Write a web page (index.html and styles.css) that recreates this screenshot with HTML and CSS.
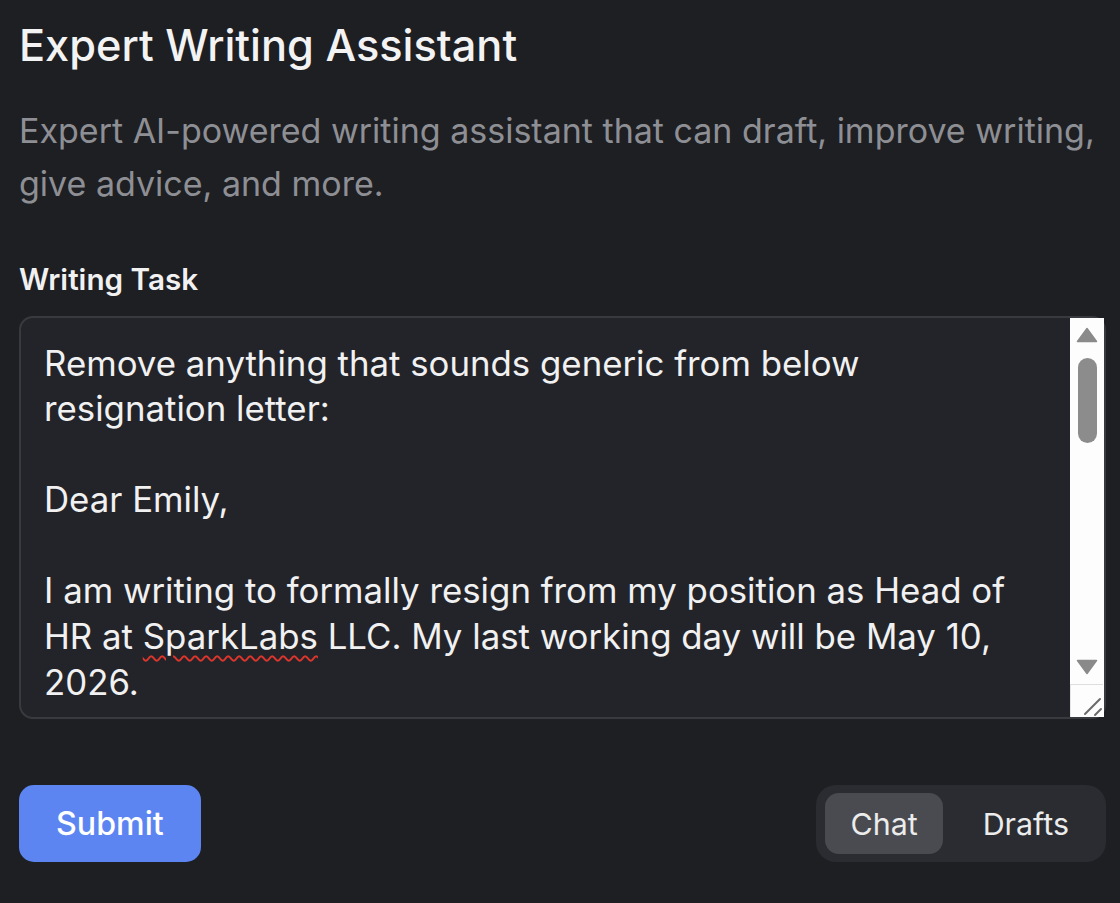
FILE: index.html
```html
<!DOCTYPE html>
<html lang="en">
<head>
<meta charset="utf-8">
<title>Expert Writing Assistant</title>
<link rel="stylesheet" href="styles.css">
</head>
<body>
<main class="page">
  <h1 class="title">Expert Writing Assistant</h1>
  <p class="desc">Expert AI-powered writing assistant that can draft, improve writing, give advice, and more.</p>
  <label class="label">Writing Task</label>
  <div class="editor">
    <div class="editor-text">Remove anything that sounds generic from below resignation letter:

Dear Emily,

I am writing to formally resign from my position as Head of HR at <span class="misspelled">SparkLabs</span> LLC. My last working day will be May 10, 2026.

Thank you for the opportunities for professional and personal development that you have provided me during my time here.</div>
    <div class="scrollbar">
      <svg class="arrow" width="22" height="16" viewBox="0 0 22 16"><path d="M11 1.5 L20.5 14.5 L1.5 14.5 Z" fill="#8a8a8a" stroke="#8a8a8a" stroke-width="1.5" stroke-linejoin="round"/></svg>
      <div class="thumb"></div>
      <svg class="arrow down" width="22" height="16" viewBox="0 0 22 16"><path d="M1.5 1.5 L20.5 1.5 L11 14.5 Z" fill="#8a8a8a" stroke="#8a8a8a" stroke-width="1.5" stroke-linejoin="round"/></svg>
      <div class="resizer">
        <svg width="33" height="33" viewBox="0 0 33 33"><path d="M15 30 L30 15 M25 31 L31 25" stroke="#6b6b6b" stroke-width="2" stroke-linecap="round"/></svg>
      </div>
    </div>
  </div>
  <div class="actions">
    <button class="submit">Submit</button>
    <div class="toggle">
      <button class="tab active">Chat</button>
      <button class="tab">Drafts</button>
    </div>
  </div>
</main>
</body>
</html>
```

FILE: styles.css
```css
html, body {
  margin: 0;
  background: #1e1f23;
}

body {
  font-family: Inter, "Noto Sans", "Liberation Sans", sans-serif;
  color: #f1f1f2;
}

.page {
  width: 1087px;
  padding: 19px 0 0 19px;
}

.title {
  margin: 0;
  font-size: 43.3px;
  line-height: 52px;
  font-weight: 500;
  color: #f3f3f4;
}

.desc {
  margin: 33px 0 0;
  font-size: 34px;
  line-height: 53.2px;
  color: #8e8f94;
}

.label {
  display: block;
  margin-top: 47px;
  font-size: 29.7px;
  line-height: 45.6px;
  font-weight: 600;
  color: #f1f1f2;
}

.editor {
  margin-top: 13px;
  height: 403px;
  box-sizing: border-box;
  border: 2px solid #393a3f;
  border-radius: 14px;
  background: #232429;
  display: flex;
}

.editor-text {
  flex: 1;
  min-width: 0;
  padding: 22.5px 45px 0 23px;
  font-size: 34.8px;
  line-height: 45.6px;
  white-space: pre-wrap;
  overflow: hidden;
  color: #f1f1f2;
  border-radius: 12px 0 0 12px;
}

.misspelled {
  text-decoration: underline wavy #e0352b;
  text-decoration-thickness: 1.5px;
  text-underline-offset: 6px;
}

.scrollbar {
  width: 34px;
  flex: none;
  background: #fdfdfd;
  display: flex;
  flex-direction: column;
  align-items: center;
}

.arrow {
  display: block;
  margin-top: 9px;
}

.arrow.down {
  margin-top: auto;
}

.thumb {
  margin-top: 15px;
  width: 19px;
  height: 85px;
  border-radius: 10px;
  background: #8c8c8c;
}

.resizer {
  margin-top: 9px;
  width: 33px;
  height: 33px;
  align-self: flex-start;
  box-sizing: border-box;
  border-top: 1px solid #dedede;
  border-left: 1px solid #e6e6e6;
  background: #fdfdfd;
}

.resizer svg {
  display: block;
  margin: -1px 0 0 -1px;
}

.actions {
  margin-top: 66px;
  display: flex;
  justify-content: space-between;
  align-items: center;
}

.submit {
  height: 77px;
  padding: 0 37px;
  border: none;
  border-radius: 15px;
  background: #5c85f1;
  color: #ffffff;
  font-family: inherit;
  font-size: 32.2px;
  font-weight: 500;
}

.toggle {
  display: flex;
  gap: 15px;
  padding: 8px 12px 8px 9px;
  background: #2b2c31;
  border-radius: 20px;
}

.tab {
  height: 61px;
  padding: 0 25px;
  border: none;
  border-radius: 14px;
  background: transparent;
  color: #ececed;
  font-family: inherit;
  font-size: 30.4px;
  font-weight: 400;
}

.tab.active {
  background: #4a4b50;
}
```
